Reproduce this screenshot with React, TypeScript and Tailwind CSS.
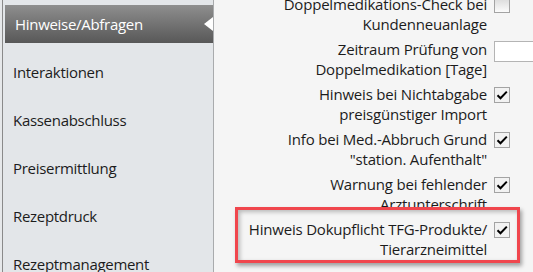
const menu = ['Hinweise/Abfragen', 'Interaktionen', 'Kassenabschluss', 'Preisermittlung', 'Rezeptdruck', 'Rezeptmanagement']

type Row = { lines: [string, string]; control: 'check' | 'empty' | 'input' }

const rows: Row[] = [
  { lines: ['Doppelmedikations-Check bei', 'Kundenneuanlage'], control: 'empty' },
  { lines: ['Zeitraum Prüfung von', 'Doppelmedikation [Tage]'], control: 'input' },
  { lines: ['Hinweis bei Nichtabgabe', 'preisgünstiger Import'], control: 'check' },
  { lines: ['Info bei Med.-Abbruch Grund', '"station. Aufenthalt"'], control: 'check' },
  { lines: ['Warnung bei fehlender', 'Arztunterschrift'], control: 'check' },
  { lines: ['Hinweis Dokupflicht TFG-Produkte/', 'Tierarzneimittel'], control: 'check' },
]

const CheckBox = ({ checked }: { checked: boolean }) => (
  <div
    className={`mt-[2px] w-4 h-4 shrink-0 border border-[#a3a3a3] flex items-center justify-center ${
      checked ? 'bg-[#f2f2f2]' : 'bg-gradient-to-b from-[#d9d9d9] to-[#fbfbfb]'
    }`}
  >
    {checked && (
      <svg width="12" height="10" viewBox="0 0 12 10">
        <path d="M1.5 5.2 L4.5 8.3 L10.8 1.6" fill="none" stroke="#000" strokeWidth="2" />
      </svg>
    )}
  </div>
)

const App: React.FC = () => {
  return (
    <div
      className="w-[533px] h-[272px] overflow-hidden flex bg-[#f5f5f5] text-[15px] text-[#1c1c1c]"
      style={{ fontFamily: '"Open Sans", "Noto Sans", sans-serif' }}
    >
      <div className="w-[2px] shrink-0 bg-[#e6e8ea]" />
      <div className="w-px shrink-0 bg-[#8a8a8a]" />
      <div className="w-[211px] shrink-0 bg-[#e3e6e9] border-r border-[#a9abad] flex flex-col tracking-[-0.3px]">
        {menu.map((item, i) => (
          <div key={item} className="h-12 shrink-0 flex flex-col justify-center">
            {i === 0 ? (
              <div className="relative h-[38px] ml-[2px] flex items-center pl-[10px] text-white bg-gradient-to-b from-[#8f8f8f] to-[#585858]">
                {item}
                <div className="absolute right-0 top-[12px] w-0 h-0 border-y-[7.5px] border-y-transparent border-r-[9px] border-r-white" />
              </div>
            ) : (
              <div className="pl-[10px]">{item}</div>
            )}
          </div>
        ))}
      </div>
      <div className="relative flex-1 min-w-0 flex flex-col gap-[6px] -mt-[5px] leading-[19.5px]">
        {rows.map((row) => (
          <div key={row.lines[0]} className="flex items-start gap-[7px]">
            <div className="w-[273px] text-right shrink-0 tracking-[-0.2px]">
              <div>{row.lines[0]}</div>
              <div>{row.lines[1]}</div>
            </div>
            {row.control === 'input' ? (
              <div className="mt-[1px] w-[60px] h-[21px] shrink-0 bg-white border border-[#b4b4b4]" />
            ) : (
              <CheckBox checked={row.control === 'check'} />
            )}
          </div>
        ))}
        <div className="absolute left-[21px] top-[212px] w-[285px] h-[56px] border-[3px] border-[#f0464d] shadow-[2px_3px_4px_rgba(0,0,0,0.35),inset_2px_2px_4px_rgba(0,0,0,0.25)]" />
      </div>
    </div>
  )
}

export default App
